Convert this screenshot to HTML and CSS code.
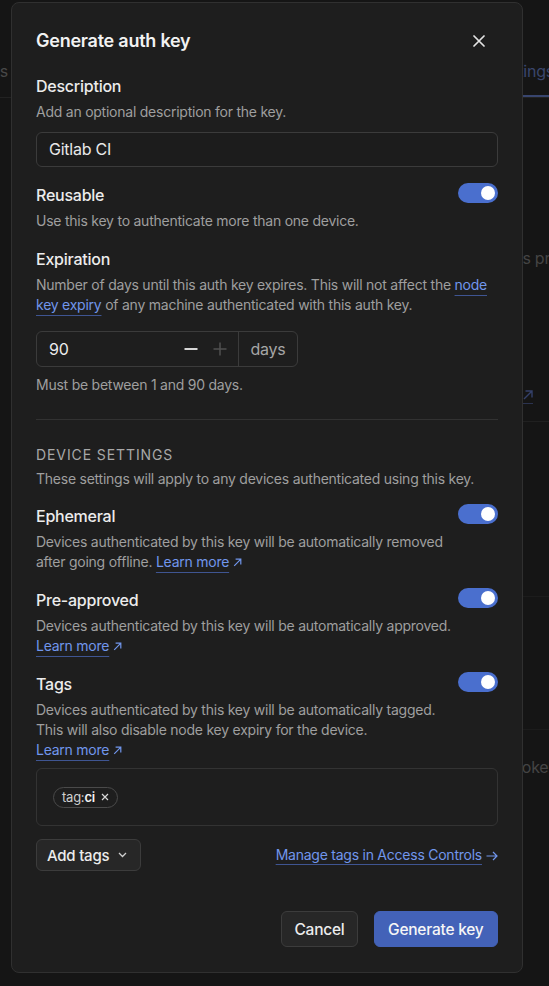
FILE: index.html
```html
<!DOCTYPE html>
<html lang="en">
<head>
<meta charset="utf-8">
<title>Generate auth key</title>
<link rel="stylesheet" href="styles.css">
</head>
<body>
<div class="page">
  <div class="bg-tabs">
    <span class="bg-tab bg-tab-first">Logs</span>
    <span class="bg-tab bg-tab-active">Settings</span>
  </div>
  <div class="bg-content">
    <p class="bg-text bg-text-1">Keys provide a way</p>
    <div class="bg-link-row"><span class="bg-link"><svg width="10" height="10" viewBox="0 0 10 10"><path d="M1 9L9 1M2.5 1H9V7.5" stroke="currentColor" stroke-width="1.4" fill="none"/></svg></span></div>
    <div class="bg-row bg-row-1"></div>
    <div class="bg-row bg-row-2"></div>
    <div class="bg-row-3"><span class="bg-text">Tokens</span></div>
  </div>

  <div class="modal" role="dialog" aria-labelledby="modal-title">
    <div class="modal-header">
      <h2 id="modal-title" class="modal-title">Generate auth key</h2>
      <button class="close-btn" aria-label="Close">
        <svg width="12" height="12" viewBox="0 0 12 12"><path d="M1 1L11 11M11 1L1 11" stroke="currentColor" stroke-width="1.7" stroke-linecap="round"/></svg>
      </button>
    </div>

    <div class="field field-first">
      <div class="field-label">Description</div>
      <p class="help">Add an optional description for the key.</p>
      <div class="text-input">Gitlab CI</div>
    </div>

    <div class="field">
      <div class="field-row">
        <div class="field-label">Reusable</div>
        <span class="toggle"><span class="knob"></span></span>
      </div>
      <p class="help">Use this key to authenticate more than one device.</p>
    </div>

    <div class="field">
      <div class="field-label">Expiration</div>
      <p class="help">Number of days until this auth key expires. This will not affect the <a class="link">node key expiry</a> of any machine authenticated with this auth key.</p>
      <div class="number-input">
        <div class="number-main">
          <span class="number-value">90</span>
          <span class="stepper">
            <svg class="step step-minus" width="14" height="14" viewBox="0 0 14 14"><path d="M0.5 7H13.5" stroke="currentColor" stroke-width="2"/></svg>
            <svg class="step step-plus" width="14" height="14" viewBox="0 0 14 14"><path d="M0.5 7H13.5M7 0.5V13.5" stroke="currentColor" stroke-width="1.5"/></svg>
          </span>
        </div>
        <div class="number-unit">days</div>
      </div>
      <p class="help help-note">Must be between 1 and 90 days.</p>
    </div>

    <hr class="divider">

    <div class="section-title">DEVICE SETTINGS</div>
    <p class="help">These settings will apply to any devices authenticated using this key.</p>

    <div class="field field-device">
      <div class="field-row">
        <div class="field-label">Ephemeral</div>
        <span class="toggle"><span class="knob"></span></span>
      </div>
      <p class="help help-narrow">Devices authenticated by this key will be automatically removed after going offline. <a class="link">Learn more<svg class="ext" width="9" height="9" viewBox="0 0 9 9"><path d="M1.2 7.8L7.6 1.4M2.6 1.2H7.8V6.4" stroke="currentColor" stroke-width="1.2" fill="none"/></svg></a></p>
    </div>

    <div class="field">
      <div class="field-row">
        <div class="field-label">Pre-approved</div>
        <span class="toggle"><span class="knob"></span></span>
      </div>
      <p class="help help-narrow">Devices authenticated by this key will be automatically approved. <a class="link">Learn more<svg class="ext" width="9" height="9" viewBox="0 0 9 9"><path d="M1.2 7.8L7.6 1.4M2.6 1.2H7.8V6.4" stroke="currentColor" stroke-width="1.2" fill="none"/></svg></a></p>
    </div>

    <div class="field">
      <div class="field-row">
        <div class="field-label">Tags</div>
        <span class="toggle"><span class="knob"></span></span>
      </div>
      <p class="help help-narrow">Devices authenticated by this key will be automatically tagged.<br>This will also disable node key expiry for the device.<br><a class="link">Learn more<svg class="ext" width="9" height="9" viewBox="0 0 9 9"><path d="M1.2 7.8L7.6 1.4M2.6 1.2H7.8V6.4" stroke="currentColor" stroke-width="1.2" fill="none"/></svg></a></p>
      <div class="tag-box">
        <span class="chip"><span class="chip-prefix">tag:</span><span class="chip-name">ci</span>
          <svg class="chip-x" width="8" height="8" viewBox="0 0 8 8"><path d="M1 1L7 7M7 1L1 7" stroke="currentColor" stroke-width="1.2"/></svg>
        </span>
      </div>
      <div class="tag-actions">
        <button class="btn btn-secondary btn-small">Add tags
          <svg class="chev" width="9" height="6" viewBox="0 0 9 6"><path d="M1 1L4.5 4.5L8 1" stroke="currentColor" stroke-width="1.3" fill="none"/></svg>
        </button>
        <a class="link link-manage">Manage tags in Access Controls<svg class="arrow" width="12" height="10" viewBox="0 0 12 10"><path d="M0.5 5H11M7 1L11 5L7 9" stroke="currentColor" stroke-width="1.2" fill="none"/></svg></a>
      </div>
    </div>

    <div class="modal-footer">
      <button class="btn btn-secondary">Cancel</button>
      <button class="btn btn-primary">Generate key</button>
    </div>
  </div>
</div>
</body>
</html>
```
FILE: styles.css
```css
* { box-sizing: border-box; }
html, body { margin: 0; padding: 0; }
body {
  background: #151515;
  font-family: Inter, "Noto Sans", "Liberation Sans", sans-serif;
  letter-spacing: -0.015em;
  color: #e8e8e8;
  width: 549px;
  height: 986px;
  overflow: hidden;
}
.page { position: relative; width: 549px; height: 986px; overflow: hidden; }

/* background page (dimmed) */
.bg-tabs {
  height: 98px;
  display: flex;
  justify-content: space-between;
  align-items: flex-end;
  border-bottom: 1px solid #222;
  white-space: nowrap;
}
.bg-tab {
  font-size: 16px;
  line-height: 24px;
  padding-bottom: 12px;
  color: #484848;
  border-bottom: 2px solid transparent;
}
.bg-tab-first { margin-left: -28px; }
.bg-tab-active {
  color: #3a466c;
  border-bottom-color: #38456e;
  padding-right: 30px;
  margin-right: -35px;
}
.bg-content { padding-left: 495px; white-space: nowrap; }
.bg-text { font-size: 16px; line-height: 24px; color: #444; margin: 0; }
.bg-text-1 { margin-top: 148px; }
.bg-link-row {
  margin-top: 113px;
  padding-bottom: 13px;
  border-bottom: 1px solid #202020;
  display: flex;
  justify-content: flex-end;
  padding-right: 16px;
  height: 39px;
  align-items: flex-start;
  padding-top: 7px;
}
.bg-link { color: #34406a; display: flex; border-bottom: 1px solid #2b3350; padding-bottom: 3px; padding-left: 20px; }
.bg-row-1 { height: 175px; border-bottom: 1px solid #1c1c1c; }
.bg-row-2 { height: 133px; border-bottom: 1px solid #1c1c1c; }
.bg-row-3 { padding-top: 25px; padding-left: 18px; }

/* modal */
.modal {
  position: absolute;
  left: 11px;
  top: 2px;
  width: 512px;
  background: #1e1e1e;
  border: 1px solid #303030;
  border-radius: 8px;
  padding: 24px 24px 25px 24px;
}
.modal-header {
  display: flex;
  justify-content: space-between;
  align-items: center;
}
.modal-title {
  margin: 0;
  font-size: 18px;
  line-height: 28px;
  font-weight: 600;
  color: #f2f2f2;
}
.close-btn {
  width: 24px;
  height: 24px;
  margin-right: 7px;
  padding: 0;
  border: 0;
  background: transparent;
  color: #e4e4e4;
  display: flex;
  align-items: center;
  justify-content: center;
}

.field { margin-top: 16px; }
.field-first { margin-top: 19px; }
.field-device { margin-top: 15px; }
.field-row {
  display: flex;
  justify-content: space-between;
  align-items: flex-start;
}
.field-label {
  font-size: 16px;
  line-height: 24px;
  font-weight: 500;
  color: #ececec;
}
.help {
  margin: 4px 0 0 0;
  font-size: 14px;
  line-height: 20px;
  color: #9f9f9f;
}
.help-narrow { max-width: 418px; }
.help-note { margin-top: 8px; }
.link {
  color: #7196ec;
  text-decoration: underline;
  text-decoration-color: #3f5592;
  text-decoration-thickness: 1px;
  text-underline-offset: 5px;
  cursor: pointer;
}
.ext { margin-left: 4px; vertical-align: 0px; }

.text-input {
  margin-top: 10px;
  height: 35px;
  border: 1px solid #3b3b3b;
  border-radius: 6px;
  padding: 0 12px;
  font-size: 16px;
  line-height: 33px;
  color: #e8e8e8;
  background: #1c1c1c;
}

.toggle {
  width: 40px;
  height: 20px;
  border-radius: 10px;
  background: #4a6fce;
  display: flex;
  align-items: center;
  justify-content: flex-end;
  padding-right: 3px;
  flex: none;
}
.knob {
  width: 14px;
  height: 14px;
  border-radius: 50%;
  background: #fff;
}

.number-input {
  margin-top: 16px;
  width: 262px;
  height: 36px;
  display: flex;
  border: 1px solid #3b3b3b;
  border-radius: 6px;
}
.number-main {
  width: 202px;
  display: flex;
  align-items: center;
  justify-content: space-between;
  padding: 0 11px 0 12px;
  border-right: 1px solid #3b3b3b;
}
.number-value { font-size: 16px; color: #ececec; }
.stepper { display: flex; gap: 15px; align-items: center; }
.step { display: block; }
.step-minus { color: #d6d6d6; }
.step-plus { color: #505050; }
.number-unit {
  flex: 1;
  display: flex;
  align-items: center;
  justify-content: center;
  font-size: 16px;
  color: #a6a6a6;
}

.divider {
  margin: 24px 0 0 0;
  border: 0;
  border-top: 1px solid #323232;
  height: 0;
}
.section-title {
  margin-top: 25px;
  font-size: 14px;
  line-height: 20px;
  letter-spacing: 0.9px;
  color: #a8a8a8;
  font-weight: 400;
}

.tag-box {
  margin-top: 8px;
  height: 58px;
  border: 1px solid #333;
  border-radius: 6px;
  display: flex;
  align-items: center;
  padding: 0 16px;
}
.chip {
  height: 21px;
  display: inline-flex;
  align-items: center;
  padding: 0 8px 0 8px;
  border: 1px solid #4a4a4a;
  border-radius: 11px;
  font-size: 13px;
  color: #cfcfcf;
}
.chip-name { font-weight: 600; color: #f4f4f4; }
.chip-x { margin-left: 6px; color: #d8d8d8; }

.tag-actions {
  margin-top: 13px;
  display: flex;
  justify-content: space-between;
  align-items: center;
}
.btn {
  font-family: inherit;
  letter-spacing: -0.015em;
  border-radius: 6px;
  font-size: 15.5px;
  font-weight: 500;
  height: 36px;
  padding: 0 12px;
  cursor: pointer;
}
.btn-secondary {
  background: #272727;
  border: 1px solid #3c3c3c;
  color: #ececec;
}
.btn-small {
  height: 32px;
  font-size: 15px;
  padding: 0 13px 0 10px;
  display: inline-flex;
  align-items: center;
  gap: 9px;
  white-space: nowrap;
}
.chev { color: #d0d0d0; }
.link-manage { font-size: 14px; line-height: 20px; text-underline-offset: 4px; }
.arrow { margin-left: 4px; vertical-align: -1px; }

.modal-footer {
  margin-top: 40px;
  display: flex;
  justify-content: flex-end;
  gap: 16px;
}
.btn-primary {
  background: #4362b8;
  border: 1px solid #4362b8;
  color: #f6f6f6;
  padding: 0 13.5px;
}
```
